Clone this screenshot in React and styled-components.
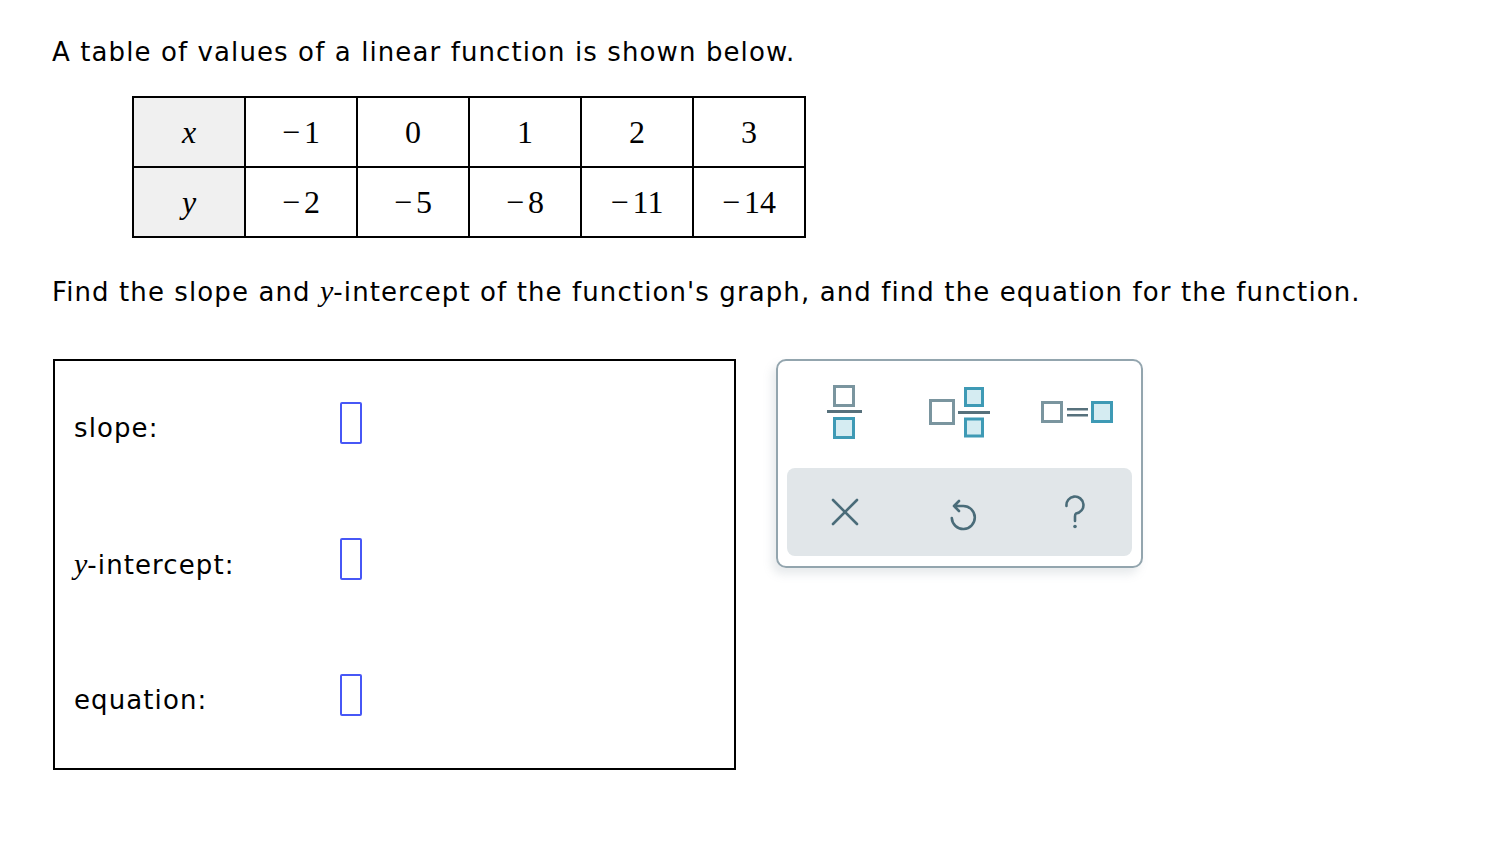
import React from "react";
import styled, { createGlobalStyle } from "styled-components";

const GlobalStyle = createGlobalStyle`
  body {
    margin: 0;
    background: #ffffff;
    font-family: "DejaVu Sans", Verdana, sans-serif;
    color: #000000;
  }
`;

const Page = styled.div`
  padding: 34px 0 60px 52px;
`;

const Prompt = styled.p`
  margin: ${(p) => p.$top || 0}px 0 0 0;
  font-size: 26px;
  line-height: 36px;
  letter-spacing: 1.1px;
`;

const MathVar = styled.span`
  font-family: "Liberation Serif", "Times New Roman", serif;
  font-style: italic;
  font-size: 30px;
  letter-spacing: 0;
`;

const ValueTable = styled.div`
  display: grid;
  grid-template-columns: repeat(6, 112px);
  width: 672px;
  margin: 26px 0 0 80px;
  border-left: 2px solid #000;
  border-top: 2px solid #000;
`;

const Cell = styled.div`
  box-sizing: border-box;
  height: 70px;
  display: flex;
  align-items: center;
  justify-content: center;
  border-right: 2px solid #000;
  border-bottom: 2px solid #000;
  background: ${(p) => (p.$head ? "#f0f0f0" : "#ffffff")};
  font-family: "Liberation Serif", "Times New Roman", serif;
  font-size: 32px;
  font-style: ${(p) => (p.$head ? "italic" : "normal")};
`;

const Minus = styled.span`
  margin-right: 4px;
`;

const AnswerRow = styled.div`
  display: flex;
  align-items: flex-start;
  gap: 40px;
  margin-top: 49px;
  margin-left: 1px;
`;

const AnswerBox = styled.div`
  box-sizing: border-box;
  width: 683px;
  height: 411px;
  border: 2px solid #000;
  padding: 41px 0 0 19px;
  display: flex;
  flex-direction: column;
  gap: 94px;
`;

const Field = styled.div`
  display: flex;
  align-items: center;
  height: 42px;
`;

const Label = styled.span`
  width: 266px;
  font-size: 26px;
  letter-spacing: 1.1px;
  padding-top: 9px;
`;

const Blank = styled.span`
  box-sizing: border-box;
  width: 22px;
  height: 42px;
  border: 2px solid #4757f6;
  border-radius: 2px;
`;

const Keypad = styled.div`
  box-sizing: border-box;
  width: 367px;
  height: 209px;
  border: 2px solid #93a5ae;
  border-radius: 10px;
  padding: 0 9px 9px 9px;
  box-shadow: -4px 6px 10px rgba(120, 140, 150, 0.18);
  display: flex;
  flex-direction: column;
`;

const KeyRow = styled.div`
  display: grid;
  grid-template-columns: repeat(3, 1fr);
  height: ${(p) => p.$h}px;
  margin-bottom: ${(p) => p.$mb || 0}px;
  background: ${(p) => p.$bg || "transparent"};
  border-radius: 8px;
`;

const Key = styled.div`
  display: flex;
  align-items: center;
  justify-content: center;
  padding-left: ${(p) => p.$pl || 0}px;
`;

const gray = "#7a959f";
const teal = "#3e9ab5";
const fillT = "#d5ecf2";
const dark = "#4a6c79";

const FractionIcon = () => (
  <svg width="36" height="56" viewBox="0 0 36 56">
    <rect x="7.5" y="1.5" width="19" height="19" fill="#fff" stroke={gray} strokeWidth="3" />
    <rect x="0" y="25" width="35" height="3" fill="#57717c" />
    <rect x="7.5" y="33.5" width="19" height="19" fill={fillT} stroke={teal} strokeWidth="3" />
  </svg>
);

const MixedIcon = () => (
  <svg width="62" height="52" viewBox="0 0 62 52">
    <rect x="1.5" y="13.5" width="23" height="23" fill="#fff" stroke={gray} strokeWidth="3" />
    <rect x="29" y="24" width="32" height="3" fill="#57717c" />
    <rect x="36.5" y="1.5" width="17" height="17" fill={fillT} stroke={teal} strokeWidth="3" />
    <rect x="36.5" y="32" width="17" height="17" fill={fillT} stroke={teal} strokeWidth="3" />
  </svg>
);

const EqualsIcon = () => (
  <svg width="74" height="24" viewBox="0 0 74 24">
    <rect x="1.5" y="1.5" width="19" height="19" fill="#fff" stroke={gray} strokeWidth="3" />
    <rect x="26" y="7" width="21" height="2.5" fill="#57717c" />
    <rect x="26" y="13" width="21" height="2.5" fill="#57717c" />
    <rect x="51.5" y="1.5" width="19" height="19" fill={fillT} stroke={teal} strokeWidth="3" />
  </svg>
);

const ClearIcon = () => (
  <svg width="28" height="28" viewBox="0 0 28 28">
    <path d="M2 2 L26 26 M26 2 L2 26" stroke={dark} strokeWidth="2.6" strokeLinecap="round" />
  </svg>
);

const UndoIcon = () => (
  <svg width="34" height="40" viewBox="0 0 34 40">
    <path
      d="M16 9 L11 14 L16 19 M11 14 H20 A11.5 11.5 0 1 1 8.8 26"
      fill="none"
      stroke={dark}
      strokeWidth="2.6"
      strokeLinecap="round"
      strokeLinejoin="round"
    />
  </svg>
);

const HelpIcon = () => (
  <svg width="32" height="40" viewBox="0 0 32 40">
    <path
      d="M7.5 14 A8.5 8.5 0 1 1 17 21.5 Q16 22.2 16 24.5 V29"
      fill="none"
      stroke={dark}
      strokeWidth="2.6"
      strokeLinecap="round"
    />
    <circle cx="16" cy="34.5" r="1.8" fill={dark} />
  </svg>
);

const xs = [-1, 0, 1, 2, 3];
const ys = [-2, -5, -8, -11, -14];

const Num = ({ v }) =>
  v < 0 ? (
    <>
      <Minus>−</Minus>
      {Math.abs(v)}
    </>
  ) : (
    <>{v}</>
  );

const App = () => {
  return (
    <>
      <GlobalStyle />
      <Page>
        <Prompt>A table of values of a linear function is shown below.</Prompt>
        <ValueTable>
          <Cell $head>x</Cell>
          {xs.map((v) => (
            <Cell key={"x" + v}>
              <Num v={v} />
            </Cell>
          ))}
          <Cell $head>y</Cell>
          {ys.map((v) => (
            <Cell key={"y" + v}>
              <Num v={v} />
            </Cell>
          ))}
        </ValueTable>
        <Prompt $top={35}>
          Find the slope and <MathVar>y</MathVar>-intercept of the function's graph, and find the
          equation for the function.
        </Prompt>
        <AnswerRow>
          <AnswerBox>
            <Field>
              <Label>slope:</Label>
              <Blank />
            </Field>
            <Field>
              <Label>
                <MathVar>y</MathVar>-intercept:
              </Label>
              <Blank />
            </Field>
            <Field>
              <Label>equation:</Label>
              <Blank />
            </Field>
          </AnswerBox>
          <Keypad>
            <KeyRow $h={104} $mb={3}>
              <Key>
                <FractionIcon />
              </Key>
              <Key>
                <MixedIcon />
              </Key>
              <Key $pl={6}>
                <EqualsIcon />
              </Key>
            </KeyRow>
            <KeyRow $h={88} $bg="#e1e6e9">
              <Key>
                <ClearIcon />
              </Key>
              <Key>
                <UndoIcon />
              </Key>
              <Key>
                <HelpIcon />
              </Key>
            </KeyRow>
          </Keypad>
        </AnswerRow>
      </Page>
    </>
  );
};

export default App;
